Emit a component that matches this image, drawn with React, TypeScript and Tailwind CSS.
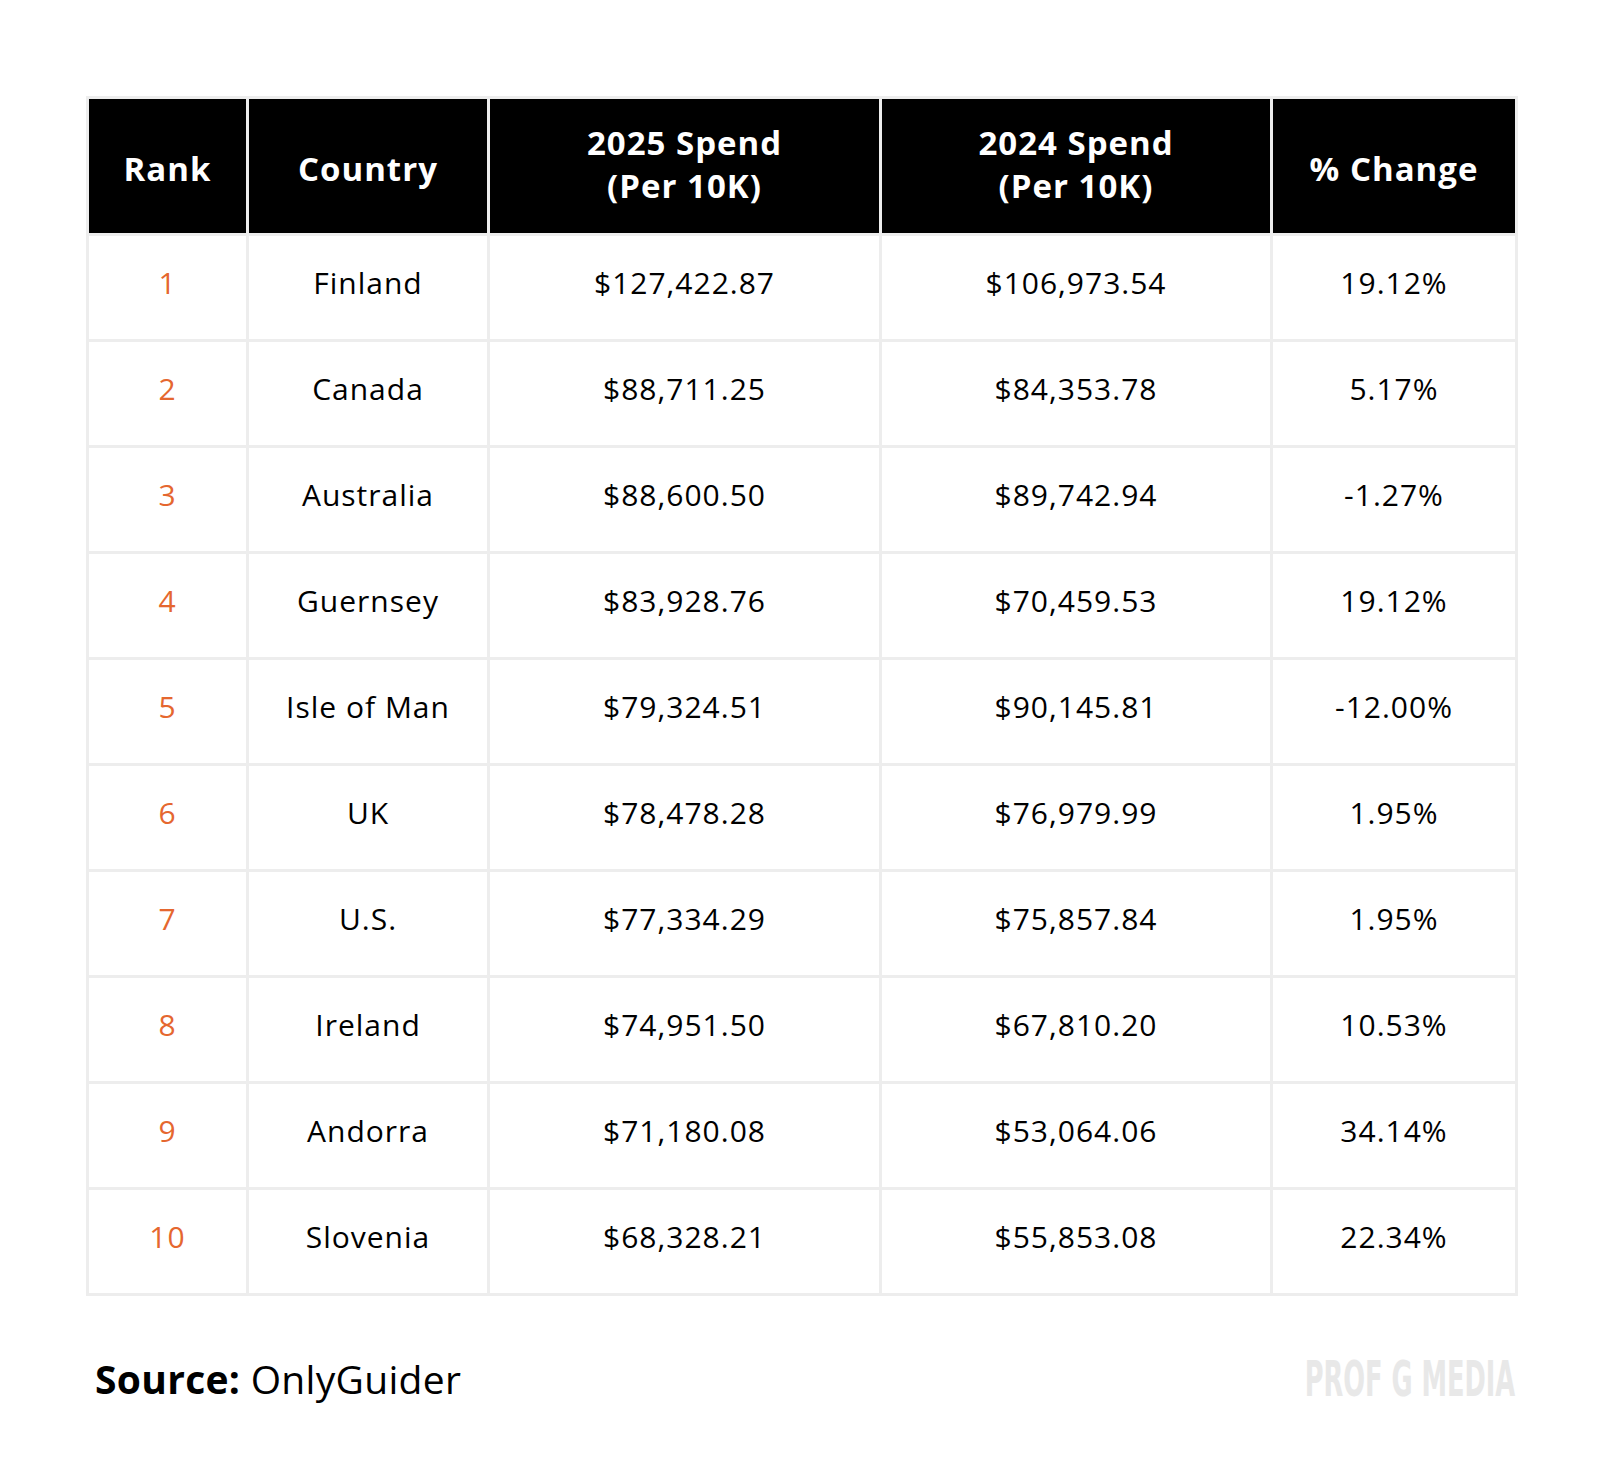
const rows = [
  ['1', 'Finland', '$127,422.87', '$106,973.54', '19.12%'],
  ['2', 'Canada', '$88,711.25', '$84,353.78', '5.17%'],
  ['3', 'Australia', '$88,600.50', '$89,742.94', '-1.27%'],
  ['4', 'Guernsey', '$83,928.76', '$70,459.53', '19.12%'],
  ['5', 'Isle of Man', '$79,324.51', '$90,145.81', '-12.00%'],
  ['6', 'UK', '$78,478.28', '$76,979.99', '1.95%'],
  ['7', 'U.S.', '$77,334.29', '$75,857.84', '1.95%'],
  ['8', 'Ireland', '$74,951.50', '$67,810.20', '10.53%'],
  ['9', 'Andorra', '$71,180.08', '$53,064.06', '34.14%'],
  ['10', 'Slovenia', '$68,328.21', '$55,853.08', '22.34%'],
];

const cell = 'border-[3px] border-[#ededed] text-center align-middle';

export default function App() {
  return (
    <div
      className="w-[1600px] h-[1479px] bg-white pt-[96px] pl-[86px]"
      style={{ fontFamily: '"Open Sans", "Liberation Sans", sans-serif' }}
    >
      <table className="w-[1429px] table-fixed border-collapse">
        <colgroup>
          <col className="w-[160px]" />
          <col className="w-[241px]" />
          <col className="w-[392px]" />
          <col className="w-[391px]" />
          <col className="w-[245px]" />
        </colgroup>
        <thead>
          <tr className="h-[137px] bg-black text-white text-[33px] font-bold leading-[43px] tracking-[1px]">
            <th className={`${cell} pt-[4px]`}>Rank</th>
            <th className={`${cell} pt-[4px]`}>Country</th>
            <th className={`${cell} pb-[4px]`}>
              2025 Spend
              <br />
              (Per 10K)
            </th>
            <th className={`${cell} pb-[4px]`}>
              2024 Spend
              <br />
              (Per 10K)
            </th>
            <th className={`${cell} pt-[4px]`}>% Change</th>
          </tr>
        </thead>
        <tbody className="text-[30px] text-black tracking-[1px]">
          {rows.map((r) => (
            <tr key={r[0]} className="h-[106px]">
              <td className={`${cell} pb-[10px] text-[#e5672f]`}>{r[0]}</td>
              <td className={`${cell} pb-[10px]`}>{r[1]}</td>
              <td className={`${cell} pb-[10px]`}>{r[2]}</td>
              <td className={`${cell} pb-[10px]`}>{r[3]}</td>
              <td className={`${cell} pb-[10px]`}>{r[4]}</td>
            </tr>
          ))}
        </tbody>
      </table>

      <div className="mt-[48px] flex w-[1429px] items-center justify-between pl-[9px]">
        <p className="text-[39px] text-black tracking-[0.3px] mt-[6px]">
          <span className="font-bold">Source:</span> OnlyGuider
        </p>
        <span
          className="text-[#e8e8e8] text-[50px] font-bold leading-none inline-block origin-right scale-x-[0.57] mt-[6px]"
          style={{ fontFamily: '"Liberation Sans Narrow", "DejaVu Sans Condensed", "Liberation Sans", sans-serif' }}
        >
          PROF G MEDIA
        </span>
      </div>
    </div>
  );
}
